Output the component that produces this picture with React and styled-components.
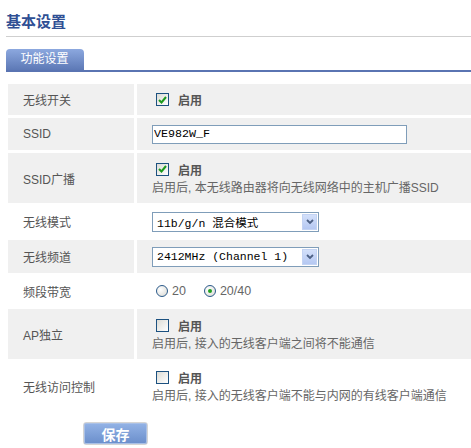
import styled, { createGlobalStyle } from 'styled-components';

const GlobalStyle = createGlobalStyle`
  html, body {
    margin: 0;
    padding: 0;
    background: #fff;
  }
  body {
    font-family: "Liberation Sans", "Noto Sans CJK SC", sans-serif;
    font-size: 12px;
    color: #555;
  }
`;

const Page = styled.div`
  width: 471px;
  padding-left: 6px;
  box-sizing: border-box;
`;

const Title = styled.h2`
  margin: 0;
  padding-top: 12px;
  height: 24px;
  line-height: 20px;
  font-size: 15px;
  font-weight: bold;
  color: #2f4f94;
  border-bottom: 1px solid #cfcfcf;
`;

const TabBar = styled.div`
  margin-top: 12px;
  display: flex;
  border-bottom: 2px solid #5a74b2;
`;

const Tab = styled.div`
  width: 78px;
  height: 21px;
  line-height: 21px;
  text-align: center;
  color: #fff;
  font-size: 12px;
  border-radius: 4px 4px 0 0;
  background: linear-gradient(#8ca8df, #5d79b6);
  box-sizing: border-box;
  padding-right: 1px;
`;

const Grid = styled.div`
  margin-top: 12px;
  margin-left: 2px;
  display: grid;
  grid-template-columns: 126px 1fr;
  column-gap: 3px;
  row-gap: 3px;
`;

const Label = styled.div`
  height: ${(p) => p.$h}px;
  background: ${(p) => (p.$gray ? '#f0f0f0' : '#fff')};
  padding-left: 15px;
  display: flex;
  align-items: center;
  color: #555;
`;

const Value = styled.div`
  height: ${(p) => p.$h}px;
  background: ${(p) => (p.$gray ? '#f0f0f0' : '#fff')};
  padding-left: 15px;
  display: flex;
  flex-direction: column;
  justify-content: center;
`;

const Line = styled.div`
  display: flex;
  align-items: center;
  height: 19px;
`;

const Box = styled.span`
  width: 13px;
  height: 13px;
  box-sizing: border-box;
  margin-left: 4px;
  margin-right: 9px;
  border: 1px solid #1c5180;
  background: linear-gradient(135deg, #dcdcd6, #fff);
  display: flex;
  align-items: center;
  justify-content: center;
`;

const Enable = styled.span`
  font-weight: bold;
  color: #555;
  font-size: 12px;
`;

const Note = styled.div`
  color: #666;
  line-height: 18px;
`;

const TextInput = styled.input`
  width: 255px;
  height: 19px;
  box-sizing: border-box;
  border: 1px solid #7f9db9;
  padding: 0 0 0 1px;
  font-family: "Liberation Mono", monospace;
  font-size: 11.7px;
  color: #000;
  outline: none;
`;

const Select = styled.div`
  width: 167px;
  height: 20px;
  box-sizing: border-box;
  border: 1px solid #7f9db9;
  background: #fff;
  display: flex;
  align-items: center;
  justify-content: space-between;
  padding: 0 1px 0 4px;
  font-family: "Liberation Mono", "Noto Sans CJK SC", monospace;
  font-size: 11.5px;
  color: #000;
`;

const Arrow = styled.span`
  width: 15px;
  height: 16px;
  background: linear-gradient(#d3e0fa, #b5c8f2);
  border: 1px solid #c3d3f3;
  box-sizing: border-box;
  display: flex;
  align-items: center;
  justify-content: center;
`;

const Radios = styled.div`
  display: flex;
  align-items: center;
  color: #666;
  font-size: 12.5px;
`;

const Radio = styled.span`
  width: 12px;
  height: 12px;
  box-sizing: border-box;
  border-radius: 50%;
  border: 1px solid #2b5a8a;
  background: radial-gradient(circle at 35% 35%, #fff, #d8d8d2);
  margin-left: 4px;
  margin-right: 4px;
  display: flex;
  align-items: center;
  justify-content: center;

  &::after {
    content: '';
    width: 4px;
    height: 4px;
    border-radius: 50%;
    background: ${(p) => (p.$on ? '#21a121' : 'transparent')};
  }
`;

const RadioText = styled.span`
  margin-right: 14px;
`;

const Footer = styled.div`
  padding: 12px 0 0 77px;
`;

const SaveButton = styled.button`
  width: 65px;
  height: 23px;
  border: 1px solid #d4d4d4;
  border-radius: 3px;
  box-shadow: inset 0 0 0 1px #a9c0e6;
  background: linear-gradient(#93b3e6, #6a8ecb);
  color: #fff;
  font-family: "Noto Sans CJK SC", sans-serif;
  font-size: 14px;
  font-weight: bold;
  padding: 0;
  line-height: 20px;
`;

function Check({ on }) {
  return (
    <Box>
      {on && (
        <svg width="9" height="8" viewBox="0 0 9 8">
          <path d="M1 4 L3.5 6.5 L8 1" fill="none" stroke="#1d9a1d" strokeWidth="2" />
        </svg>
      )}
    </Box>
  );
}

function Chevron() {
  return (
    <Arrow>
      <svg width="8" height="6" viewBox="0 0 8 6">
        <path d="M1 1 L4 4 L7 1" fill="none" stroke="#4d6185" strokeWidth="1.8" />
      </svg>
    </Arrow>
  );
}

function Toggle({ on, note }) {
  return (
    <>
      <Line>
        <Check on={on} />
        <Enable>启用</Enable>
      </Line>
      {note && <Note>{note}</Note>}
    </>
  );
}

export default function App() {
  return (
    <Page>
      <GlobalStyle />
      <Title>基本设置</Title>
      <TabBar>
        <Tab>功能设置</Tab>
      </TabBar>
      <Grid>
        <Label $gray $h={31}>无线开关</Label>
        <Value $gray $h={31}>
          <Toggle on />
        </Value>

        <Label $gray $h={32}>SSID</Label>
        <Value $gray $h={32}>
          <TextInput defaultValue="VE982W_F" />
        </Value>

        <Label $gray $h={50}>SSID广播</Label>
        <Value $gray $h={50}>
          <Toggle on note="启用后, 本无线路由器将向无线网络中的主机广播SSID" />
        </Value>

        <Label $h={31}>无线模式</Label>
        <Value $h={31}>
          <Select>
            <span>11b/g/n 混合模式</span>
            <Chevron />
          </Select>
        </Value>

        <Label $gray $h={33}>无线频道</Label>
        <Value $gray $h={33}>
          <Select>
            <span>2412MHz (Channel 1)</span>
            <Chevron />
          </Select>
        </Value>

        <Label $h={30}>频段带宽</Label>
        <Value $h={30}>
          <Radios>
            <Radio />
            <RadioText>20</RadioText>
            <Radio $on />
            <RadioText>20/40</RadioText>
          </Radios>
        </Value>

        <Label $gray $h={50}>AP独立</Label>
        <Value $gray $h={50}>
          <Toggle note="启用后, 接入的无线客户端之间将不能通信" />
        </Value>

        <Label $h={48}>无线访问控制</Label>
        <Value $h={48}>
          <Toggle note="启用后, 接入的无线客户端不能与内网的有线客户端通信" />
        </Value>
      </Grid>
      <Footer>
        <SaveButton>保存</SaveButton>
      </Footer>
    </Page>
  );
}
